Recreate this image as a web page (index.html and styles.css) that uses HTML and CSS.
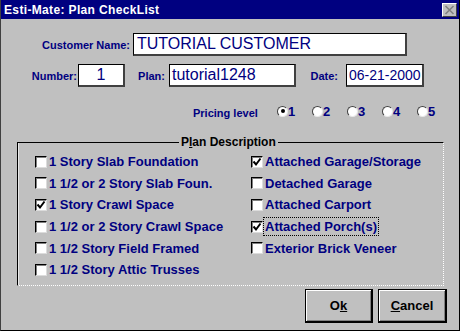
FILE: index.html
```html
<!DOCTYPE html>
<html>
<head>
<meta charset="utf-8">
<link rel="stylesheet" href="styles.css">
</head>
<body>
<div class="window">
  <div class="titlebar">
    <span class="title">Esti-Mate: Plan CheckList</span>
    <span class="close"><svg width="11" height="10" viewBox="0 0 11 10"><path d="M1.5 1 L9.5 9 M9.5 1 L1.5 9" stroke="#808080" stroke-width="1.6" fill="none"/></svg></span>
  </div>
  <div class="content">
    <div class="row row1">
      <span class="lbl l-cust">Customer Name:</span>
      <div class="field f-cust">TUTORIAL CUSTOMER</div>
    </div>
    <div class="row row2">
      <span class="lbl l-num">Number:</span>
      <div class="field f-num">1</div>
      <span class="lbl l-plan">Plan:</span>
      <div class="field f-plan">tutorial1248</div>
      <span class="lbl l-date">Date:</span>
      <div class="field f-date">06-21-2000</div>
    </div>
    <div class="pricing">
      <span class="plabel">Pricing level</span>
      <span class="ritem"><span class="radio on"></span>1</span>
      <span class="ritem"><span class="radio"></span>2</span>
      <span class="ritem"><span class="radio"></span>3</span>
      <span class="ritem"><span class="radio"></span>4</span>
      <span class="ritem"><span class="radio"></span>5</span>
    </div>
    <fieldset class="group">
      <legend>P<u>l</u>an Description</legend>
      <div class="checks">
        <div class="col">
          <div class="chk"><span class="box"></span><span class="ctext">1 Story Slab Foundation</span></div>
          <div class="chk"><span class="box"></span><span class="ctext">1 1/2 or 2 Story Slab Foun.</span></div>
          <div class="chk"><span class="box"><svg width="10" height="10" viewBox="0 0 10 10"><path d="M1.5 4.5 L4 7.5 L8.5 1.5" stroke="#000" stroke-width="2" fill="none"/></svg></span><span class="ctext">1 Story Crawl Space</span></div>
          <div class="chk"><span class="box"></span><span class="ctext">1 1/2 or 2 Story Crawl Space</span></div>
          <div class="chk"><span class="box"></span><span class="ctext">1 1/2 Story Field Framed</span></div>
          <div class="chk"><span class="box"></span><span class="ctext">1 1/2 Story Attic Trusses</span></div>
        </div>
        <div class="col">
          <div class="chk"><span class="box"><svg width="10" height="10" viewBox="0 0 10 10"><path d="M1.5 4.5 L4 7.5 L8.5 1.5" stroke="#000" stroke-width="2" fill="none"/></svg></span><span class="ctext">Attached Garage/Storage</span></div>
          <div class="chk"><span class="box"></span><span class="ctext">Detached Garage</span></div>
          <div class="chk"><span class="box"></span><span class="ctext">Attached Carport</span></div>
          <div class="chk"><span class="box"><svg width="10" height="10" viewBox="0 0 10 10"><path d="M1.5 4.5 L4 7.5 L8.5 1.5" stroke="#000" stroke-width="2" fill="none"/></svg></span><span class="ctext focus">Attached Porch(s)</span></div>
          <div class="chk"><span class="box"></span><span class="ctext">Exterior Brick Veneer</span></div>
        </div>
      </div>
    </fieldset>
    <div class="buttons">
      <button class="btn b-ok">O<u>k</u></button>
      <button class="btn b-cancel"><u>C</u>ancel</button>
    </div>
  </div>
</div>
</body>
</html>
```
FILE: styles.css
```css
* { box-sizing: border-box; }
html, body { margin: 0; padding: 0; background: #c0c0c0; }
body { font-family: "Liberation Sans", Arial, sans-serif; }

.window {
  width: 460px;
  height: 331px;
  background: #c0c0c0;
  border-left: 1px solid #404040;
  border-right: 1px solid #000;
  border-bottom: 1px solid #000;
  overflow: hidden;
}

.titlebar {
  height: 19px;
  background: #000080;
  display: flex;
  align-items: center;
  justify-content: space-between;
  padding-left: 3px;
  padding-right: 2px;
}
.title {
  color: #fff;
  font-weight: bold;
  font-size: 12px;
  letter-spacing: 0.35px;
}
.close {
  width: 15px;
  height: 14px;
  background: #c0c0c0;
  border-top: 1px solid #fff;
  border-left: 1px solid #fff;
  border-right: 1px solid #404040;
  border-bottom: 1px solid #404040;
  display: flex;
  align-items: center;
  justify-content: center;
}

.content { display: flex; flex-direction: column; }

.row { display: flex; align-items: center; }
.row1 { margin-top: 14px; height: 23px; }
.row2 { margin-top: 8px; height: 23px; }

.lbl {
  color: #000080;
  font-weight: bold;
  font-size: 11px;
  text-align: right;
}
.l-cust { width: 129px; margin-right: 3px; }
.l-num { width: 76px; margin-right: 1px; }
.l-plan { width: 44px; padding-right: 4px; }
.l-date { width: 50px; padding-right: 8px; }

.field {
  background: #fff;
  height: 23px;
  border: 1px solid #000;
  border-right: 2px solid #404040;
  border-bottom: 2px solid #404040;
  color: #000080;
  display: flex;
  align-items: center;
  white-space: nowrap;
  overflow: hidden;
}
.f-cust { width: 274px; font-size: 16px; padding-left: 3px; }
.f-num { width: 47px; font-size: 16px; justify-content: center; }
.f-plan { width: 127px; font-size: 16px; padding-left: 2px; }
.f-date { width: 78px; font-size: 14px; padding-left: 2px; }

.pricing {
  margin-top: 16px;
  height: 16px;
  display: flex;
  align-items: center;
  padding-left: 192px;
}
.plabel {
  color: #000080;
  font-weight: bold;
  font-size: 11px;
  width: 84px;
  padding-top: 4px;
}
.ritem {
  width: 35px;
  display: flex;
  align-items: center;
  color: #000080;
  font-weight: bold;
  font-size: 13px;
}
.radio {
  width: 11px;
  height: 11px;
  border-radius: 50%;
  background: #fff;
  border: 1px solid;
  border-color: #404040 #e8e8e8 #e8e8e8 #404040;
  display: flex;
  align-items: center;
  justify-content: center;
}
.radio.on::after {
  content: "";
  width: 4px;
  height: 4px;
  border-radius: 50%;
  background: #000;
}

.group {
  margin: 16px 0 0 16px;
  width: 427px;
  padding: 2px 0 4px 17px;
  border: 0;
  border-top: 1px solid #000;
  border-left: 1px solid #000;
  border-right: 1px dotted #fff;
  border-bottom: 1px dotted #fff;
  box-shadow: inset 1px 0 0 #e8e8e8;
  min-width: 0;
}
.group legend {
  margin-left: 144px;
  padding: 0 2px;
  font-size: 12px;
  font-weight: bold;
  color: #000;
  line-height: 14px;
}

.checks { display: flex; }
.col { display: flex; flex-direction: column; }
.col:first-child { width: 216px; }
.chk {
  height: 21.6px;
  display: flex;
  align-items: center;
}
.box {
  width: 12px;
  height: 12px;
  background: #fff;
  border: 1px solid;
  border-color: #000 #dcdcdc #dcdcdc #000;
  box-shadow: inset 1px 1px 0 #808080;
  margin-right: 2px;
  display: flex;
  align-items: center;
  justify-content: center;
  flex: none;
}
.ctext {
  color: #000080;
  font-weight: bold;
  font-size: 13px;
  white-space: nowrap;
}
.ctext.focus {
  outline: 1px dotted #000;
  outline-offset: 1px;
}

.buttons {
  display: flex;
  justify-content: flex-end;
  gap: 5px;
  margin-top: 3px;
  padding-right: 12px;
}
.btn {
  height: 34px;
  background: #c0c0c0;
  border: 1px solid #000;
  border-right-width: 2px;
  border-bottom-width: 2px;
  box-shadow: inset 1px 1px 0 #fff, inset -1px -1px 0 #808080;
  font-family: "Liberation Sans", Arial, sans-serif;
  font-weight: bold;
  font-size: 13px;
  color: #000;
  padding: 0;
}
.b-ok { width: 68px; }
.b-cancel { width: 69px; }
```
